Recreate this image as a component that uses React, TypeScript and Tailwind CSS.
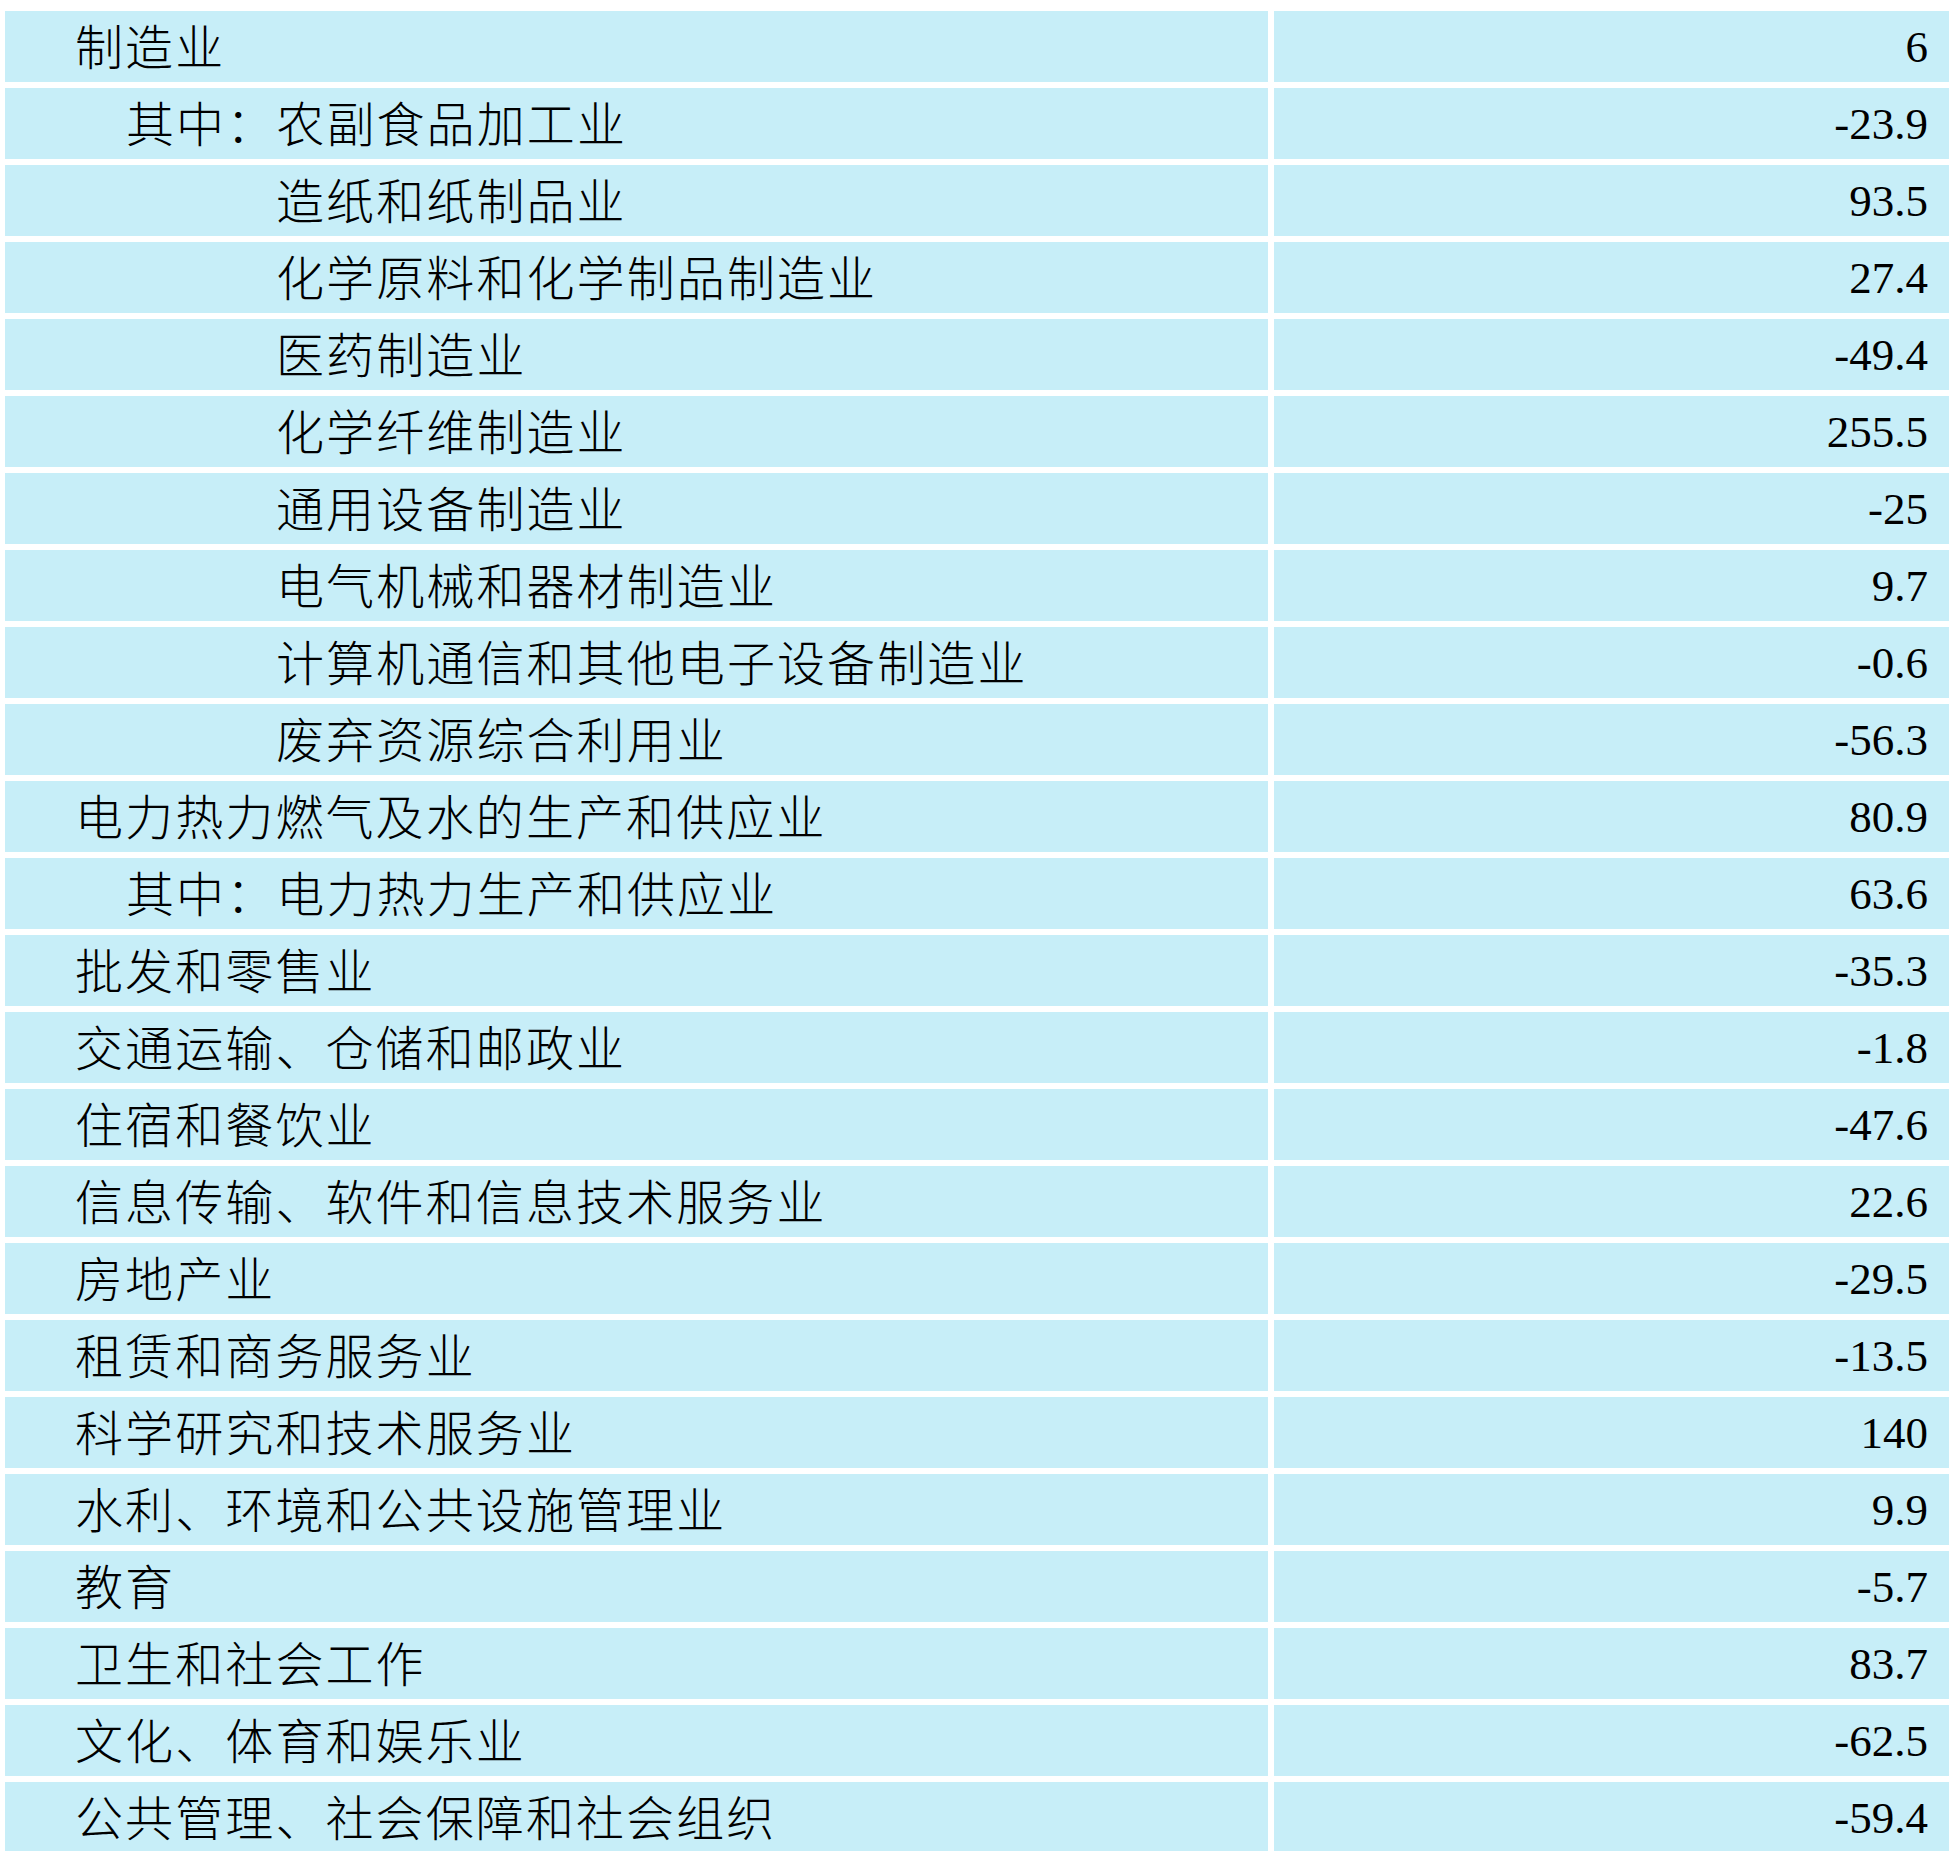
const rows: { label: string; value: string; level: 0 | 1 | 2 }[] = [
  { label: "制造业", value: "6", level: 0 },
  { label: "其中：农副食品加工业", value: "-23.9", level: 1 },
  { label: "造纸和纸制品业", value: "93.5", level: 2 },
  { label: "化学原料和化学制品制造业", value: "27.4", level: 2 },
  { label: "医药制造业", value: "-49.4", level: 2 },
  { label: "化学纤维制造业", value: "255.5", level: 2 },
  { label: "通用设备制造业", value: "-25", level: 2 },
  { label: "电气机械和器材制造业", value: "9.7", level: 2 },
  { label: "计算机通信和其他电子设备制造业", value: "-0.6", level: 2 },
  { label: "废弃资源综合利用业", value: "-56.3", level: 2 },
  { label: "电力热力燃气及水的生产和供应业", value: "80.9", level: 0 },
  { label: "其中：电力热力生产和供应业", value: "63.6", level: 1 },
  { label: "批发和零售业", value: "-35.3", level: 0 },
  { label: "交通运输、仓储和邮政业", value: "-1.8", level: 0 },
  { label: "住宿和餐饮业", value: "-47.6", level: 0 },
  { label: "信息传输、软件和信息技术服务业", value: "22.6", level: 0 },
  { label: "房地产业", value: "-29.5", level: 0 },
  { label: "租赁和商务服务业", value: "-13.5", level: 0 },
  { label: "科学研究和技术服务业", value: "140", level: 0 },
  { label: "水利、环境和公共设施管理业", value: "9.9", level: 0 },
  { label: "教育", value: "-5.7", level: 0 },
  { label: "卫生和社会工作", value: "83.7", level: 0 },
  { label: "文化、体育和娱乐业", value: "-62.5", level: 0 },
  { label: "公共管理、社会保障和社会组织", value: "-59.4", level: 0 },
];

const indent = {
  0: "pl-[70px]",
  1: "pl-[121px]",
  2: "pl-[271px]",
};

export default function App() {
  return (
    <div className="w-[1949px] bg-white pt-[11px] pl-[5px] font-['Liberation_Serif','Noto_Sans_CJK_SC',serif] text-black">
      <div className="grid grid-cols-[1263px_1fr] gap-[6px]">
        {rows.map((row, i) => (
          <div key={i} className="contents">
            <div
              className={`flex h-[71px] items-center bg-[#c7eef8] pt-[4px] text-[48px] font-light tracking-[2.1px] ${indent[row.level]}`}
            >
              {row.label}
            </div>
            <div className="flex h-[71px] items-center justify-end bg-[#c7eef8] pt-[3px] pr-[21px] text-[45px]">
              {row.value}
            </div>
          </div>
        ))}
      </div>
    </div>
  );
}
